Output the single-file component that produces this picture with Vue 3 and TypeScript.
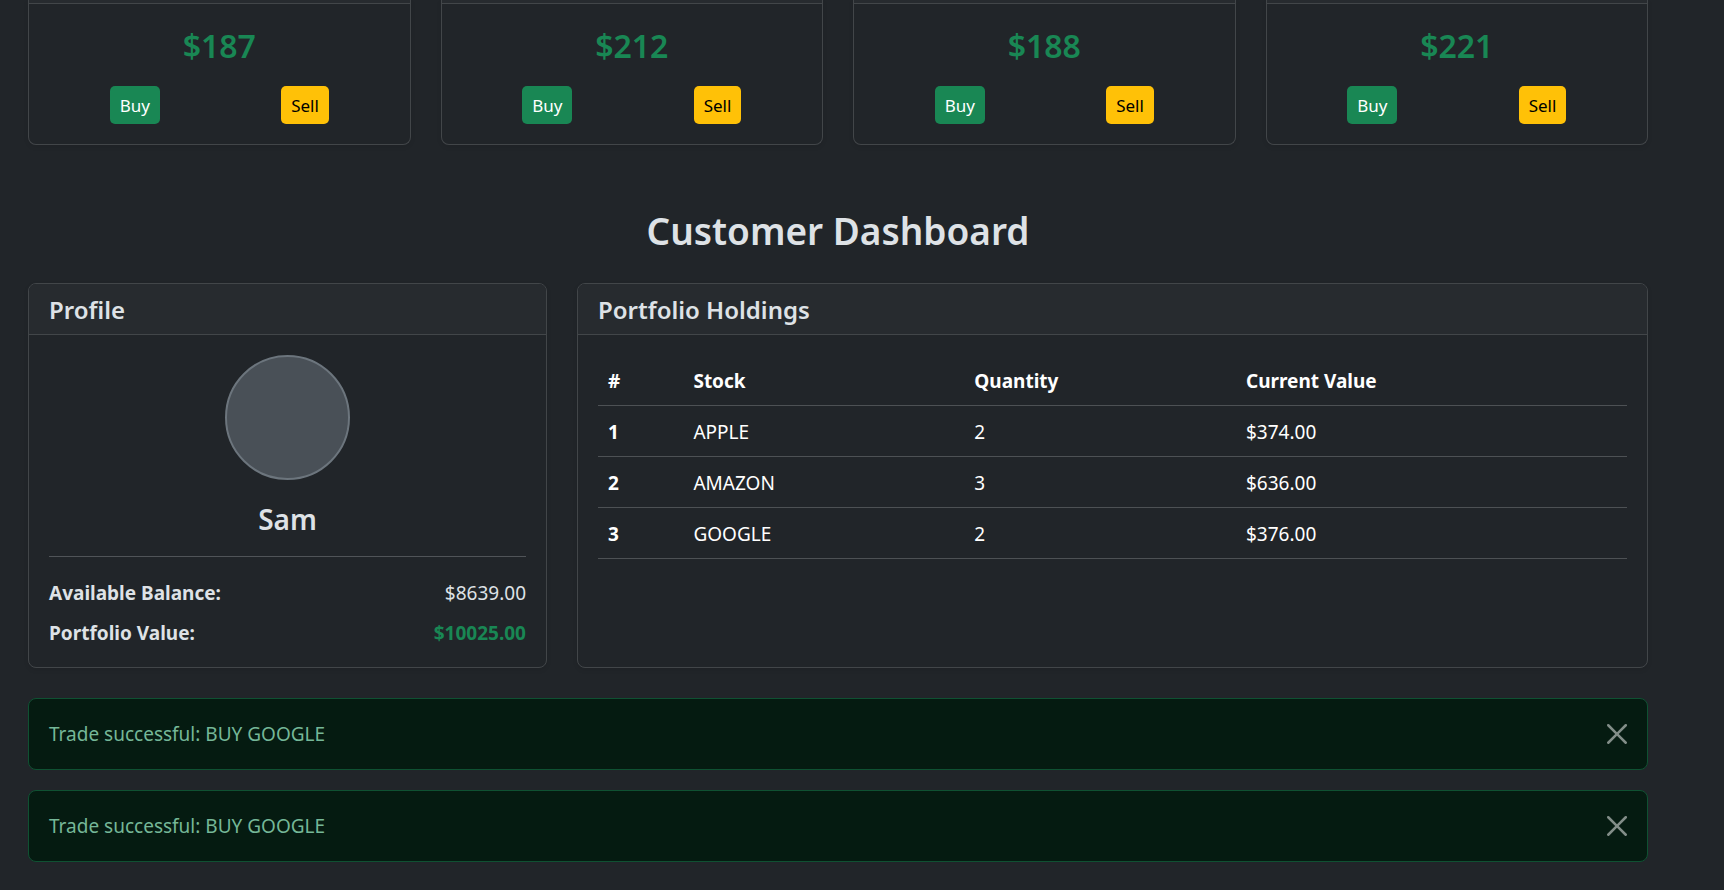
<script setup lang="ts">
import { ref } from 'vue'

interface Quote { id: number; price: number }
interface Holding { stock: string; quantity: number; value: number }
interface Notice { id: number; text: string }

const quotes: Quote[] = [
  { id: 1, price: 187 },
  { id: 2, price: 212 },
  { id: 3, price: 188 },
  { id: 4, price: 221 },
]

const holdings: Holding[] = [
  { stock: 'APPLE', quantity: 2, value: 374 },
  { stock: 'AMAZON', quantity: 3, value: 636 },
  { stock: 'GOOGLE', quantity: 2, value: 376 },
]

const notices = ref<Notice[]>([
  { id: 1, text: 'Trade successful: BUY GOOGLE' },
  { id: 2, text: 'Trade successful: BUY GOOGLE' },
])

const money = (n: number): string => `$${n.toFixed(2)}`

function dismiss(id: number): void {
  notices.value = notices.value.filter((n) => n.id !== id)
}
</script>

<template>
  <main class="page">
    <section class="quotes">
      <article v-for="q in quotes" :key="q.id" class="card">
        <div class="card-cap"></div>
        <div class="card-body">
          <h3 class="price">${{ q.price }}</h3>
          <div class="actions">
            <button type="button" class="btn buy">Buy</button>
            <button type="button" class="btn sell">Sell</button>
          </div>
        </div>
      </article>
    </section>

    <h2 class="title">Customer Dashboard</h2>

    <section class="dashboard">
      <article class="card">
        <header class="card-header"><h5>Profile</h5></header>
        <div class="card-body">
          <div class="avatar"></div>
          <h4 class="name">Sam</h4>
          <hr />
          <p class="line"><strong>Available Balance:</strong><span>{{ money(8639) }}</span></p>
          <p class="line"><strong>Portfolio Value:</strong><strong class="gain">{{ money(10025) }}</strong></p>
        </div>
      </article>

      <article class="card">
        <header class="card-header"><h5>Portfolio Holdings</h5></header>
        <div class="card-body">
          <table>
            <colgroup>
              <col class="c-index" /><col class="c-stock" /><col class="c-qty" /><col />
            </colgroup>
            <thead>
              <tr>
                <th scope="col">#</th>
                <th scope="col">Stock</th>
                <th scope="col">Quantity</th>
                <th scope="col">Current Value</th>
              </tr>
            </thead>
            <tbody>
              <tr v-for="(h, i) in holdings" :key="h.stock">
                <th scope="row">{{ i + 1 }}</th>
                <td>{{ h.stock }}</td>
                <td>{{ h.quantity }}</td>
                <td>{{ money(h.value) }}</td>
              </tr>
            </tbody>
          </table>
        </div>
      </article>
    </section>

    <section class="notices">
      <div v-for="n in notices" :key="n.id" class="alert" role="alert">
        <span>{{ n.text }}</span>
        <button type="button" class="close" aria-label="Close" @click="dismiss(n.id)">
          <svg viewBox="0 0 16 16" aria-hidden="true">
            <path d="M.293.293a1 1 0 0 1 1.414 0L8 6.586 14.293.293a1 1 0 1 1 1.414 1.414L9.414 8l6.293 6.293a1 1 0 0 1-1.414 1.414L8 9.414l-6.293 6.293a1 1 0 0 1-1.414-1.414L6.586 8 .293 1.707a1 1 0 0 1 0-1.414z" />
          </svg>
        </button>
      </div>
    </section>
  </main>
</template>

<style>
body {
  margin: 0;
  background: #212529;
}
</style>

<style scoped>
* {
  box-sizing: border-box;
}
.page {
  padding: 0 76px 28px 28px;
  color: #dee2e6;
  font: 400 19px/30px "Segoe UI", "Noto Sans", "Open Sans", sans-serif;
}
h2, h3, h4, h5, p {
  margin: 0;
  font-weight: 400;
}
h2, h3, h4, h5 {
  font-weight: 600;
}
.quotes {
  display: grid;
  grid-template-columns: repeat(4, 1fr);
  gap: 30px;
}
.card {
  display: flex;
  flex-direction: column;
  border: 1px solid #424649;
  border-radius: 8px;
  box-shadow: 0 2px 5px rgba(0, 0, 0, 0.08);
  overflow: hidden;
}
.quotes .card {
  border-top: 0;
  border-radius: 0 0 8px 8px;
}
.card-cap {
  height: 4px;
  background: #272b2f;
  border-bottom: 1px solid #424649;
}
.card-header {
  padding: 11px 20px 9px;
  background: #272b2f;
  border-bottom: 1px solid #424649;
}
.card-header h5 {
  font-size: 24px;
  line-height: 30px;
}
.card-body {
  padding: 20px;
}
.price {
  padding-top: 2px;
  margin-bottom: 20px;
  color: #198754;
  font-size: 32px;
  line-height: 40px;
  text-align: center;
}
.actions {
  display: flex;
  justify-content: space-around;
}
.btn {
  height: 38px;
  padding: 1px 10px 0;
  border: 0;
  border-radius: 5px;
  font: inherit;
  font-size: 17px;
  line-height: 36px;
  cursor: pointer;
}
.buy {
  background: #198754;
  color: #fff;
}
.sell {
  background: #ffc107;
  color: #000;
}
.title {
  margin: 62px 0 28px;
  font-size: 37px;
  line-height: 48px;
  text-align: center;
}
.dashboard {
  display: grid;
  grid-template-columns: 519fr 1071fr;
  gap: 30px;
}
.avatar {
  width: 125px;
  height: 125px;
  margin: 0 auto 21px;
  border: 2px solid #6c757d;
  border-radius: 50%;
  background: #495057;
}
.name {
  font-size: 28px;
  line-height: 36px;
  text-align: center;
}
hr {
  margin: 19px 0 20px;
  border: 0;
  border-top: 1px solid #505458;
}
.line {
  display: flex;
  justify-content: space-between;
  padding-top: 2px;
  line-height: 28px;
}
.line + .line {
  margin-top: 10px;
}
.gain {
  color: #198754;
}
table {
  width: 100%;
  border-collapse: collapse;
  table-layout: fixed;
  color: #fff;
}
.c-index {
  width: 8.3%;
}
.c-stock {
  width: 27.3%;
}
.c-qty {
  width: 26.4%;
}
th, td {
  padding: 11px 10px 9px;
  border-bottom: 1px solid #4d5154;
  text-align: left;
}
.notices {
  display: grid;
  gap: 20px;
  margin-top: 30px;
}
.alert {
  display: flex;
  align-items: center;
  justify-content: space-between;
  padding: 20px;
  border: 1px solid #0f5132;
  border-radius: 8px;
  background: #051b11;
  color: #75b798;
}
.close {
  display: flex;
  padding: 0;
  border: 0;
  background: none;
  opacity: 0.5;
  cursor: pointer;
}
.close svg {
  width: 20px;
  height: 20px;
  fill: #fff;
}
</style>
